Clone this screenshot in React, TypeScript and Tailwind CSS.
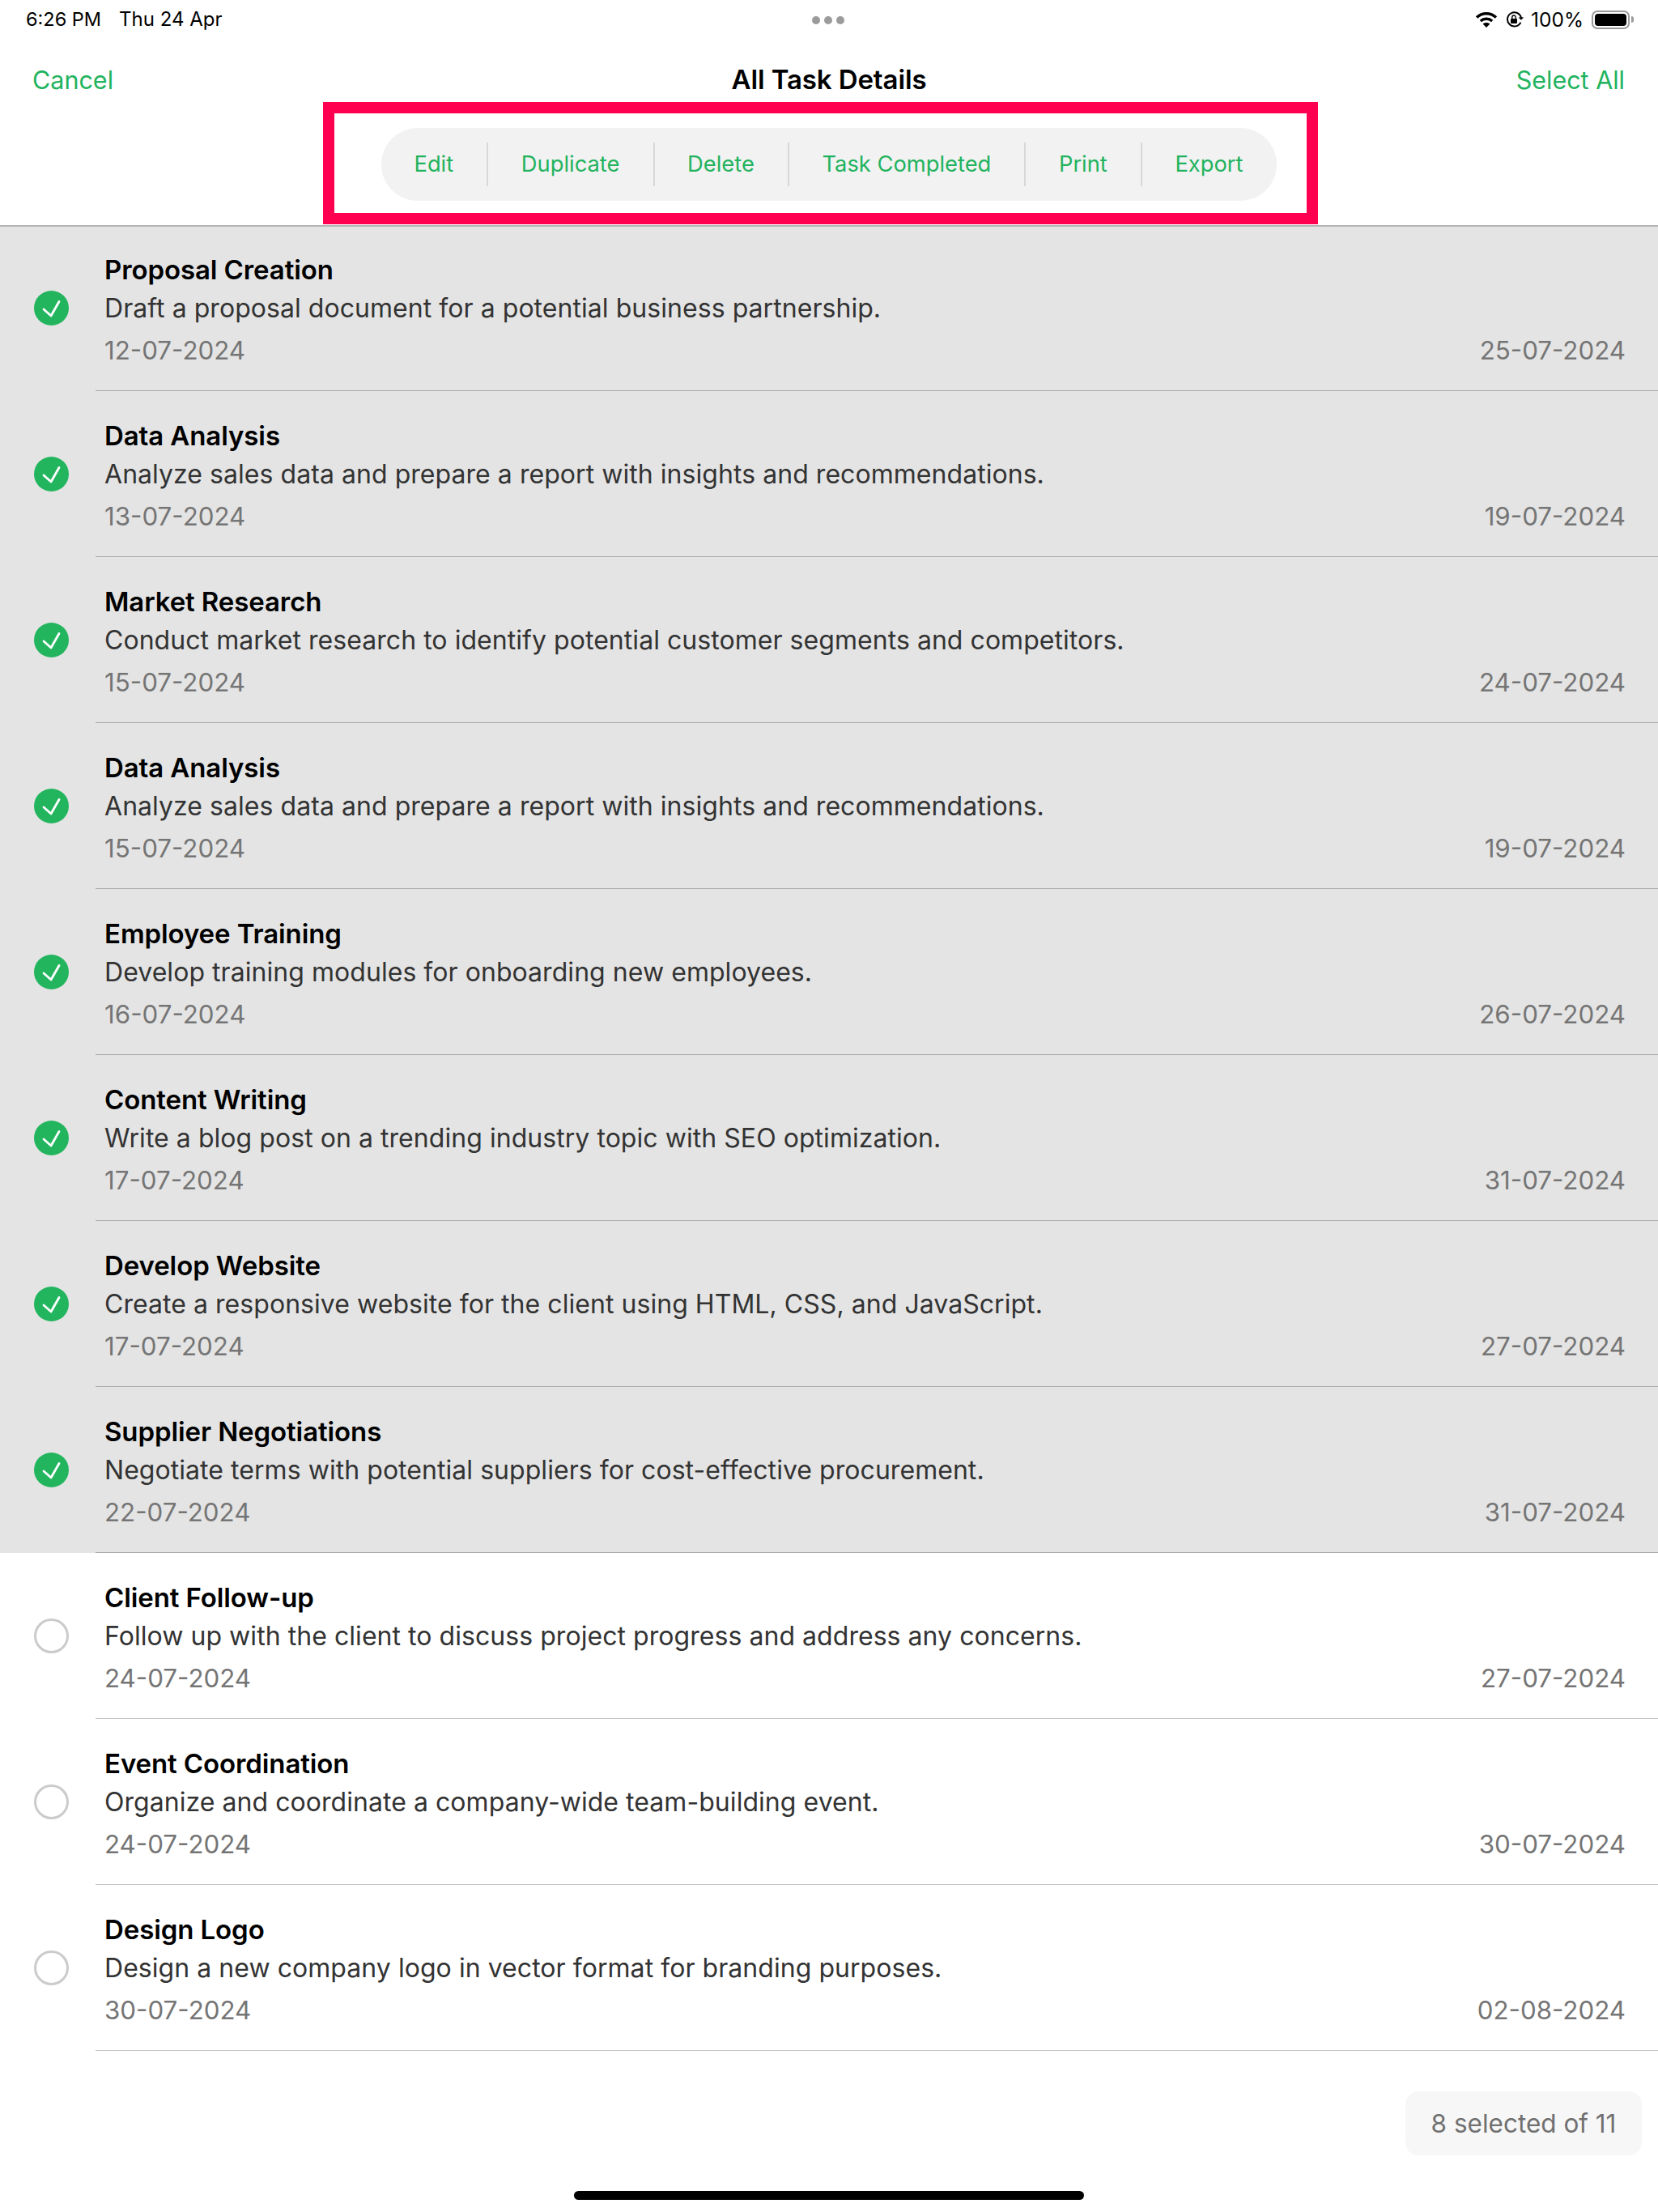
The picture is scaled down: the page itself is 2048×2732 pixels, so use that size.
const rows = [
  { title: 'Proposal Creation', desc: 'Draft a proposal document for a potential business partnership.', start: '12-07-2024', end: '25-07-2024', done: true },
  { title: 'Data Analysis', desc: 'Analyze sales data and prepare a report with insights and recommendations.', start: '13-07-2024', end: '19-07-2024', done: true },
  { title: 'Market Research', desc: 'Conduct market research to identify potential customer segments and competitors.', start: '15-07-2024', end: '24-07-2024', done: true },
  { title: 'Data Analysis', desc: 'Analyze sales data and prepare a report with insights and recommendations.', start: '15-07-2024', end: '19-07-2024', done: true },
  { title: 'Employee Training', desc: 'Develop training modules for onboarding new employees.', start: '16-07-2024', end: '26-07-2024', done: true },
  { title: 'Content Writing', desc: 'Write a blog post on a trending industry topic with SEO optimization.', start: '17-07-2024', end: '31-07-2024', done: true },
  { title: 'Develop Website', desc: 'Create a responsive website for the client using HTML, CSS, and JavaScript.', start: '17-07-2024', end: '27-07-2024', done: true },
  { title: 'Supplier Negotiations', desc: 'Negotiate terms with potential suppliers for cost-effective procurement.', start: '22-07-2024', end: '31-07-2024', done: true },
  { title: 'Client Follow-up', desc: 'Follow up with the client to discuss project progress and address any concerns.', start: '24-07-2024', end: '27-07-2024', done: false },
  { title: 'Event Coordination', desc: 'Organize and coordinate a company-wide team-building event.', start: '24-07-2024', end: '30-07-2024', done: false },
  { title: 'Design Logo', desc: 'Design a new company logo in vector format for branding purposes.', start: '30-07-2024', end: '02-08-2024', done: false },
]

const actions = ['Edit', 'Duplicate', 'Delete', 'Task Completed', 'Print', 'Export']

function Wifi() {
  return (
    <svg width="28" height="20" viewBox="0 0 28 20" fill="none" stroke="#000" strokeWidth="3.4">
      <path d="M2 7.5C9 1.2 19 1.2 26 7.5" />
      <path d="M6.8 12C11 8.4 17 8.4 21.2 12" />
      <path d="M14 20l-4.4-4.6c2.6-2 6.2-2 8.8 0z" fill="#000" stroke="none" />
    </svg>
  )
}

function RotationLock() {
  return (
    <svg width="23" height="20" viewBox="0 0 23 20" fill="none">
      <path d="M19 8A8.6 8.6 0 1 0 18.4 13.6" stroke="#000" strokeWidth="2" />
      <path d="M15.6 7.6l3.4 3.2 3.2-3.6z" fill="#000" />
      <rect x="6" y="9" width="8" height="6" rx="1" fill="#000" />
      <path d="M7.8 9V7.2a2.2 2.2 0 0 1 4.4 0V9" stroke="#000" strokeWidth="1.4" />
    </svg>
  )
}

function Check() {
  return (
    <div className="w-[43px] h-[43px] rounded-full bg-[#22b55e] flex items-center justify-center">
      <svg width="43" height="43" viewBox="0 0 43 43" fill="none">
        <path d="M12 23l9 8L31 13.5" stroke="#fff" strokeWidth="2.8" strokeLinecap="round" strokeLinejoin="round" />
      </svg>
    </div>
  )
}

export default function App() {
  return (
    <div className="relative w-[2048px] h-[2732px] bg-white overflow-hidden font-['Inter',sans-serif]">
      <header className="relative z-10 h-[280px] bg-white border-b-2 border-[#b4b4b4]">
        <div className="relative h-[48px] pl-[32px] pr-[30px] flex items-center justify-between text-[23.5px] text-black">
          <div className="flex gap-[22px]">
            <span>6:26 PM</span>
            <span className="text-[24px]">Thu 24 Apr</span>
          </div>
          <div className="absolute left-[1003px] top-[20px] flex gap-[5px]">
            <span className="w-[10px] h-[10px] rounded-full bg-[#9b9b9b]"></span>
            <span className="w-[10px] h-[10px] rounded-full bg-[#9b9b9b]"></span>
            <span className="w-[10px] h-[10px] rounded-full bg-[#9b9b9b]"></span>
          </div>
          <div className="flex items-center">
            <Wifi />
            <div className="ml-[10px]"><RotationLock /></div>
            <span className="ml-[8px] text-[24.5px]">100%</span>
            <div className="ml-[10px] flex items-center gap-[2px]">
              <div className="w-[47px] h-[23px] rounded-[7px] border-2 border-[#9a9a9a] p-[2px]">
                <div className="w-full h-full rounded-[4px] bg-black"></div>
              </div>
              <div className="w-[3px] h-[8px] rounded-r bg-[#9a9a9a]"></div>
            </div>
          </div>
        </div>
        <div className="relative flex justify-between items-center h-[52px] mt-[25px] pl-[40px] pr-[41px] text-[30.5px] text-[#22b35e]">
          <span>Cancel</span>
          <span className="absolute left-0 right-0 text-center text-[33px] font-semibold tracking-[-0.1px] text-black">All Task Details</span>
          <span>Select All</span>
        </div>
        <div className="mt-[1px] ml-[399px] w-[1229px] h-[151px] border-[14px] border-[#ff0050] flex items-center pl-[58px] pt-[3px]">
          <div className="h-[90px] w-[1106px] shrink-0 rounded-full bg-[#f2f2f2] flex items-center">
            {actions.map((a, i) => (
              <div key={a} className={`h-[54px] flex items-center pl-[40.5px] pr-[41.2px] whitespace-nowrap text-[27.3px] text-[#22b35e] ${i < actions.length - 1 ? 'border-r-2 border-[#d8d8d8]' : ''}`}>
                {a}
              </div>
            ))}
          </div>
        </div>
      </header>
      <div className="-mt-[2px]">
        {rows.map((r, i) => (
          <div key={i} className={`flex h-[205px] ${r.done ? 'bg-[#e4e4e4]' : 'bg-white'}`}>
            <div className="w-[118px] pl-[42px] flex items-center">
              {r.done ? <Check /> : <div className="w-[43px] h-[43px] rounded-full border-[3px] border-[#cbcbcb]"></div>}
            </div>
            <div className={`flex-1 pl-[11px] pr-[40px] pt-[31px] border-b ${r.done ? 'border-[#ababab]' : 'border-[#c6c6c8]'}`}>
              <div className="text-[33px] leading-[48px] font-semibold tracking-[-0.1px] text-black">{r.title}</div>
              <div className="text-[32px] leading-[47px] tracking-[0.05px] text-[#333333]">{r.desc}</div>
              <div className="flex justify-between mt-[3px] text-[31.3px] leading-[52px] text-[#757575]">
                <span>{r.start}</span>
                <span>{r.end}</span>
              </div>
            </div>
          </div>
        ))}
      </div>
      <div className="flex justify-end pr-[20px] mt-[50px]">
        <div className="h-[79px] w-[292px] rounded-[16px] bg-[#f7f7f7] flex items-center justify-center text-[31.5px] text-[#707070]">
          8 selected of 11
        </div>
      </div>
      <div className="w-[630px] h-[11px] mx-auto mt-[44px] rounded-full bg-black"></div>
    </div>
  )
}
